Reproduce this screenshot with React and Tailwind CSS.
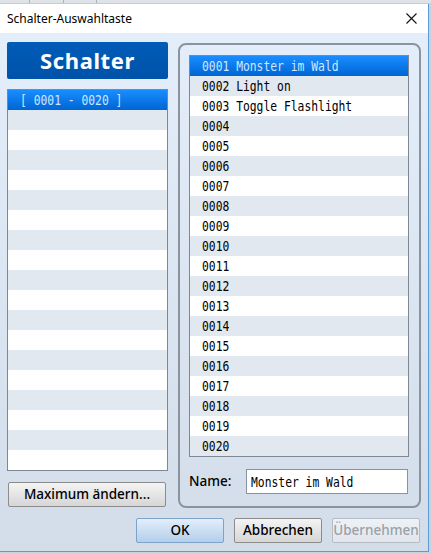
import React from "react";

const mono = { fontFamily: '"DejaVu Sans Mono", "Liberation Mono", monospace' };
const sans = { fontFamily: '"Noto Sans", "Open Sans", sans-serif' };

const names = {
  1: "Monster im Wald",
  2: "Light on",
  3: "Toggle Flashlight",
};

function MonoText({ children }) {
  return (
    <span
      className="inline-block origin-left scale-x-[0.84] text-[13.5px] leading-[20px] whitespace-pre"
      style={mono}
    >
      {children}
    </span>
  );
}

function Row({ index, selected, children }) {
  const bg = selected
    ? "bg-gradient-to-b from-[#1a8dff] to-[#0065d4] text-[#cfe6ff]"
    : index % 2 === 1
    ? "bg-[#e2e8ef] text-black"
    : "bg-white text-black";
  return (
    <div className={`h-[20px] flex items-center pl-[12px] overflow-hidden ${bg}`}>
      {children ? <MonoText>{children}</MonoText> : null}
    </div>
  );
}

function Button({ children, className = "", variant = "normal" }) {
  const v =
    variant === "ok"
      ? "border-[#7ea3c9] bg-gradient-to-b from-[#e3eefa] to-[#b3cfeb] text-black"
      : variant === "disabled"
      ? "border-[#b4bcc5] bg-gradient-to-b from-[#eef2f6] to-[#e1e6ec] text-[#9aa1a8]"
      : "border-[#8c8c8c] bg-gradient-to-b from-[#f4f4f4] to-[#d6d6d6] text-black";
  return (
    <div
      className={`h-[25px] flex items-center justify-center border rounded-[2px] text-[13.5px] font-medium ${v} ${className}`}
      style={sans}
    >
      {children}
    </div>
  );
}

export default function App() {
  return (
    <div className="w-[431px] h-[553px] relative overflow-hidden bg-[#c9d3de]">
      {/* strip of window behind */}
      <div className="h-[4px] bg-[#dfe3e8] flex border-b border-[#c4ccd6]">
        <div className="w-[30px] border-r border-[#a9b3bf]" />
        <div className="w-[34px] border-r border-[#a9b3bf]" />
        <div className="w-[33px] border-r border-[#a9b3bf]" />
      </div>
      <div className="w-[429px] h-[548px] flex flex-col border-r border-b border-[#5e9ad6]">
        {/* title bar */}
        <div className="h-[29px] bg-white flex items-center justify-between pl-[7px] pr-[11px]">
          <span className="text-[12px] text-black" style={sans}>Schalter-Auswahltaste</span>
          <svg width="11" height="11" viewBox="0 0 11 11">
            <path d="M0.5 0.5 L10.5 10.5 M10.5 0.5 L0.5 10.5" stroke="#111" strokeWidth="1.1" />
          </svg>
        </div>
        {/* body */}
        <div className="flex-1 bg-gradient-to-b from-[#e4eefa] to-[#d3dde9] flex flex-col pl-[7px] pt-[9px]">
          <div className="flex gap-[10px]">
            {/* left column */}
            <div className="w-[161px] flex flex-col">
              <div
                className="h-[37px] rounded-[2px] bg-gradient-to-b from-[#005cb8] to-[#0052a8] flex items-center justify-center text-white text-[22px] font-bold tracking-[0.6px]"
                style={sans}
              >
                Schalter
              </div>
              <div className="mt-[10px] h-[382px] border border-[#7d8894] bg-white flex flex-col overflow-hidden">
                <Row index={0} selected>
                  {"[ 0001 - 0020 ]"}
                </Row>
                {Array.from({ length: 18 }, (_, i) => (
                  <Row key={i} index={i + 1} />
                ))}
              </div>
              <Button className="mt-[11px] ml-[1px] w-[158px]">Maximum ändern...</Button>
            </div>
            {/* right group */}
            <div className="mt-[1px] w-[243px] h-[465px] border-2 border-[#8b949e] rounded-[8px] flex flex-col pt-[10px] pl-[9px]">
              <div className="w-[220px] h-[402px] border border-[#7d8894] bg-white flex flex-col">
                {Array.from({ length: 20 }, (_, i) => {
                  const n = i + 1;
                  const label = String(n).padStart(4, "0") + (names[n] ? " " + names[n] : "");
                  return (
                    <Row key={n} index={i} selected={i === 0}>
                      {label}
                    </Row>
                  );
                })}
              </div>
              <div className="mt-[12px] flex items-center">
                <span className="w-[57px] text-[13.5px] font-medium text-black" style={sans}>Name:</span>
                <div className="w-[162px] h-[25px] border border-[#8b949e] bg-white flex items-center pl-[4px] text-black overflow-hidden">
                  <MonoText>Monster im Wald</MonoText>
                </div>
              </div>
            </div>
          </div>
          <div className="mt-[10px] flex gap-[10px] pl-[129px]">
            <Button variant="ok" className="w-[88px]">OK</Button>
            <Button className="w-[88px]">Abbrechen</Button>
            <Button variant="disabled" className="w-[88px]">Übernehmen</Button>
          </div>
        </div>
      </div>
    </div>
  );
}
